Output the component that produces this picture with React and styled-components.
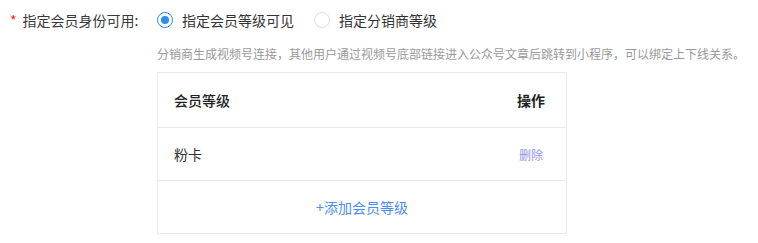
import React from "react";
import styled, { createGlobalStyle } from "styled-components";

const Global = createGlobalStyle`
  html, body { margin: 0; padding: 0; background: #fff; }
  body { font-family: "Noto Sans CJK SC", "Noto Sans", sans-serif; }
`;

const Page = styled.div`
  display: flex;
  align-items: flex-start;
`;

const Label = styled.div`
  width: 157px;
  box-sizing: border-box;
  padding-left: 10px;
  height: 40px;
  display: flex;
  align-items: center;
  font-size: 14px;
  color: #3a3a3a;
`;

const Star = styled.span`
  color: #f5222d;
  margin-right: 6px;
  font-size: 14px;
`;

const Content = styled.div`
  display: flex;
  flex-direction: column;
`;

const RadioGroup = styled.div`
  height: 40px;
  display: flex;
  align-items: center;
  gap: 20px;
`;

const RadioItem = styled.label`
  display: flex;
  align-items: center;
  font-size: 14px;
  color: #333;
  gap: 9px;
`;

const RadioCircle = styled.span`
  width: 16px;
  height: 16px;
  box-sizing: border-box;
  border-radius: 50%;
  border: 1px solid ${(p) => (p.$checked ? "#2d8cf0" : "#dcdee2")};
  display: flex;
  align-items: center;
  justify-content: center;
  &::after {
    content: "";
    width: 8px;
    height: 8px;
    border-radius: 50%;
    background: #2d8cf0;
    display: ${(p) => (p.$checked ? "block" : "none")};
  }
`;

const Hint = styled.div`
  font-size: 12px;
  color: #999;
  line-height: 20px;
  margin-top: 4px;
  margin-bottom: 8px;
`;

const Table = styled.div`
  width: 410px;
  box-sizing: border-box;
  border: 1px solid #e8eaec;
`;

const Row = styled.div`
  display: flex;
  align-items: center;
  justify-content: space-between;
  height: ${(p) => p.$h}px;
  padding: 0 21px 0 16px;
  border-top: ${(p) => (p.$first ? "none" : "1px solid #e8eaec")};
  font-size: 14px;
  color: #333;
`;

const HeadCell = styled.span`
  font-weight: ${(p) => (p.$bold ? 600 : 500)};
  color: #222;
`;

const Cell = styled.span`
  color: #333;
`;

const DeleteLink = styled.a`
  font-size: 12px;
  color: #8f93f2;
  cursor: pointer;
  margin-right: 2px;
`;

const AddRow = styled.div`
  height: 52px;
  border-top: 1px solid #e8eaec;
  display: flex;
  align-items: center;
  justify-content: center;
  font-size: 14px;
  color: #4d8cf4;
  cursor: pointer;
`;

export default function App() {
  return (
    <>
      <Global />
      <Page>
        <Label>
          <Star>*</Star>指定会员身份可用:
        </Label>
        <Content>
          <RadioGroup>
            <RadioItem>
              <RadioCircle $checked />
              指定会员等级可见
            </RadioItem>
            <RadioItem>
              <RadioCircle />
              指定分销商等级
            </RadioItem>
          </RadioGroup>
          <Hint>
            分销商生成视频号连接，其他用户通过视频号底部链接进入公众号文章后跳转到小程序，可以绑定上下线关系。
          </Hint>
          <Table>
            <Row $h={54} $first>
              <HeadCell>会员等级</HeadCell>
              <HeadCell $bold>操作</HeadCell>
            </Row>
            <Row $h={52}>
              <Cell>粉卡</Cell>
              <DeleteLink>删除</DeleteLink>
            </Row>
            <AddRow>+添加会员等级</AddRow>
          </Table>
        </Content>
      </Page>
    </>
  );
}
